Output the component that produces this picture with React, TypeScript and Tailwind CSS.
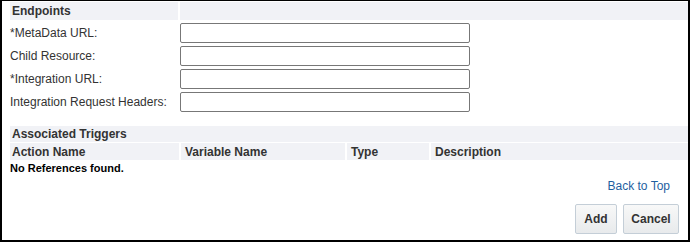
import React from "react";

const font = { fontFamily: '"Liberation Sans", Arial, sans-serif' };

function Row({ label }: { label: string }) {
  return (
    <div className="flex h-[23px] items-center">
      <div className="w-[170px] pl-[0px] text-[12px] text-[#333333]">{label}</div>
      <input
        type="text"
        className="h-[20px] w-[290px] rounded-[2px] border border-[#777777] bg-white outline-none"
      />
    </div>
  );
}

export default function App() {
  return (
    <div
      className="flex h-[242px] w-[690px] flex-col border-b-2 border-l-2 border-r-2 border-t border-black bg-white pl-[8px] pt-[1px]"
      style={font}
    >
      <div className="flex h-[18px] gap-[2px]">
        <div className="flex w-[168px] items-center bg-[#f1f2f6] pl-[2px] text-[12px] font-bold text-[#333333]">
          Endpoints
        </div>
        <div className="flex-1 bg-[#f1f2f6]" />
      </div>
      <div className="mt-[1px] flex flex-col">
        <Row label="*MetaData URL:" />
        <Row label="Child Resource:" />
        <Row label="*Integration URL:" />
        <Row label="Integration Request Headers:" />
      </div>
      <div className="mt-[13px] flex h-[16px] items-center bg-[#f1f2f6] pl-[2px] text-[12px] font-bold text-[#333333]">
        Associated Triggers
      </div>
      <div className="mt-[1px] flex h-[17px] gap-[2px] text-[12px] font-bold text-[#333333]">
        <div className="flex w-[169px] items-center bg-[#f1f2f6] pl-[2px]">Action Name</div>
        <div className="flex w-[164px] items-center bg-[#f1f2f6] pl-[4px]">Variable Name</div>
        <div className="flex w-[82px] items-center bg-[#f1f2f6] pl-[4px]">Type</div>
        <div className="flex flex-1 items-center bg-[#f1f2f6] pl-[4px]">Description</div>
      </div>
      <div className="flex h-[16px] items-center text-[11px] font-bold text-black">
        No References found.
      </div>
      <div className="mt-[1px] flex h-[17px] items-center justify-end pr-[18px]">
        <a href="#" className="text-[12px] text-[#1f5f9f]">
          Back to Top
        </a>
      </div>
      <div className="mt-[10px] flex justify-end gap-[6px] pr-[9px]">
        <button className="h-[30px] w-[42px] rounded-[2px] border border-[#c4ced7] bg-gradient-to-b from-[#f8f8f8] to-[#e8eaec] text-[12px] font-bold text-[#333333]">
          Add
        </button>
        <button className="h-[30px] w-[56px] rounded-[2px] border border-[#c4ced7] bg-gradient-to-b from-[#f8f8f8] to-[#e8eaec] text-[12px] font-bold text-[#333333]">
          Cancel
        </button>
      </div>
    </div>
  );
}
